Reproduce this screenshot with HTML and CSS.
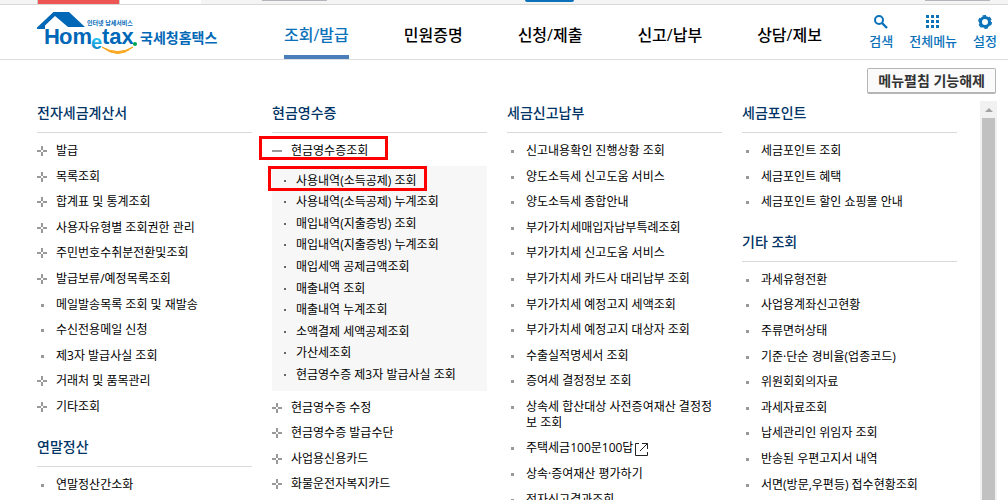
FILE: index.html
```html
<!DOCTYPE html>
<html lang="ko">
<head>
    <meta charset="UTF-8">
    <meta name="viewport" content="width=device-width, initial-scale=1.0">
    <title>국세청홈택스</title>
    <link rel="stylesheet" href="styles.css">
</head>
<body>
    <div class="top-strip">
        <span class="tab red"></span>
        <span class="tab white"></span>
        <span class="field"></span>
        <span class="search"></span>
        <span class="field last"></span>
    </div>

    <header class="header">
        <a class="logo" href="#" aria-label="홈택스">
            <svg width="182" height="46" viewBox="0 0 182 46">
                <defs>
                    <linearGradient id="eColor" x1="0" y1="0" x2="0" y2="1">
                        <stop offset="0.4" stop-color="#27c0ee"/>
                        <stop offset="1" stop-color="#0068b7"/>
                    </linearGradient>
                </defs>
                <path d="M0 16.5 L16.5 1 H32 L48 16 H31 L18 5 L8 14.5 V18 H0 Z" fill="#0068b7"/>
                <g class="logo-word">
                    <text x="7" y="33">H</text>
                    <text x="22" y="33">om</text>
                    <text class="logo-e" x="54" y="38" fill="url(#eColor)">e</text>
                    <text x="65" y="33">tax</text>
                </g>
                <circle cx="98" cy="33" r="2" fill="#00a650"/>
                <path d="M65 36 Q81 49 96 36 Q81 45 65 36 Z" fill="#f9a61a" stroke="#f9a61a"/>
                <text class="logo-sub" x="50" y="14">인터넷 납세서비스</text>
                <text class="logo-name" x="103" y="32">국세청홈택스</text>
            </svg>
        </a>
        <nav class="nav">
            <a class="active" href="#">조회/발급</a>
            <a href="#">민원증명</a>
            <a href="#">신청/제출</a>
            <a href="#">신고/납부</a>
            <a href="#">상담/제보</a>
        </nav>
        <div class="tools">
            <a href="#">
                <svg width="14" height="14" viewBox="0 0 14 14" fill="none" stroke="#0b72ba">
                    <circle cx="5" cy="5" r="4" stroke-width="2"/>
                    <path d="M8 8 L13 13" stroke-width="2.4"/>
                </svg>
                검색
            </a>
            <a href="#">
                <svg width="14" height="14" viewBox="0 0 14 14" fill="#0b72ba">
                    <path d="M0 0h3v3H0zM5 0h3v3H5zM10 0h3v3h-3zM0 5h3v3H0zM5 5h3v3H5zM10 5h3v3h-3zM0 10h3v3H0zM5 10h3v3H5zM10 10h3v3h-3z"/>
                </svg>
                전체메뉴
            </a>
            <a href="#">
                <svg width="14" height="14" viewBox="0 0 14 14" fill="none" stroke="#0b72ba">
                    <circle cx="7" cy="7" r="4.5" stroke-width="3"/>
                    <circle cx="7" cy="7" r="6.2" stroke-width="1.6" stroke-dasharray="3.6 2.89"/>
                </svg>
                설정
            </a>
        </div>
    </header>

    <main class="menu">
        <div class="menu-top">
            <button type="button">메뉴펼침 기능해제</button>
        </div>
        <div class="menu-body">
            <div class="columns">
                <div class="column">
                    <h2>전자세금계산서</h2>
                    <ul>
                        <li class="plus"><a href="#">발급</a></li>
                        <li class="plus"><a href="#">목록조회</a></li>
                        <li class="plus"><a href="#">합계표 및 통계조회</a></li>
                        <li class="plus"><a href="#">사용자유형별 조회권한 관리</a></li>
                        <li class="plus"><a href="#">주민번호수취분전환및조회</a></li>
                        <li class="plus"><a href="#">발급보류/예정목록조회</a></li>
                        <li><a href="#">메일발송목록 조회 및 재발송</a></li>
                        <li><a href="#">수신전용메일 신청</a></li>
                        <li><a href="#">제3자 발급사실 조회</a></li>
                        <li class="plus"><a href="#">거래처 및 품목관리</a></li>
                        <li class="plus"><a href="#">기타조회</a></li>
                    </ul>
                    <h2>연말정산</h2>
                    <ul>
                        <li><a href="#">연말정산간소화</a></li>
                    </ul>
                </div>

                <div class="column">
                    <h2>현금영수증</h2>
                    <ul>
                        <li class="minus marked"><a href="#">현금영수증조회</a></li>
                        <li class="sub">
                            <ul>
                                <li class="marked"><a href="#">사용내역(소득공제) 조회</a></li>
                                <li><a href="#">사용내역(소득공제) 누계조회</a></li>
                                <li><a href="#">매입내역(지출증빙) 조회</a></li>
                                <li><a href="#">매입내역(지출증빙) 누계조회</a></li>
                                <li><a href="#">매입세액 공제금액조회</a></li>
                                <li><a href="#">매출내역 조회</a></li>
                                <li><a href="#">매출내역 누계조회</a></li>
                                <li><a href="#">소액결제 세액공제조회</a></li>
                                <li><a href="#">가산세조회</a></li>
                                <li><a href="#">현금영수증 제3자 발급사실 조회</a></li>
                            </ul>
                        </li>
                        <li class="plus"><a href="#">현금영수증 수정</a></li>
                        <li class="plus"><a href="#">현금영수증 발급수단</a></li>
                        <li class="plus"><a href="#">사업용신용카드</a></li>
                        <li class="plus"><a href="#">화물운전자복지카드</a></li>
                    </ul>
                </div>

                <div class="column">
                    <h2>세금신고납부</h2>
                    <ul>
                        <li><a href="#">신고내용확인 진행상황 조회</a></li>
                        <li><a href="#">양도소득세 신고도움 서비스</a></li>
                        <li><a href="#">양도소득세 종합안내</a></li>
                        <li><a href="#">부가가치세매입자납부특례조회</a></li>
                        <li><a href="#">부가가치세 신고도움 서비스</a></li>
                        <li><a href="#">부가가치세 카드사 대리납부 조회</a></li>
                        <li><a href="#">부가가치세 예정고지 세액조회</a></li>
                        <li><a href="#">부가가치세 예정고지 대상자 조회</a></li>
                        <li><a href="#">수출실적명세서 조회</a></li>
                        <li><a href="#">증여세 결정정보 조회</a></li>
                        <li><a href="#">상속세 합산대상 사전증여재산 결정정보 조회</a></li>
                        <li>
                            <a class="external" href="#">주택세금100문100답<svg width="13" height="13" viewBox="0 0 13 13" fill="none" stroke="#222">
                                <path d="M4 0.5 H0.5 V12.5 H12.5 V9 M7 0.5 H12.5 V6 M12.5 0.5 L5 8"/>
                            </svg></a>
                        </li>
                        <li><a href="#">상속·증여재산 평가하기</a></li>
                        <li><a href="#">전자신고결과조회</a></li>
                    </ul>
                </div>

                <div class="column">
                    <h2>세금포인트</h2>
                    <ul>
                        <li><a href="#">세금포인트 조회</a></li>
                        <li><a href="#">세금포인트 혜택</a></li>
                        <li><a href="#">세금포인트 할인 쇼핑몰 안내</a></li>
                    </ul>
                    <h2>기타 조회</h2>
                    <ul>
                        <li><a href="#">과세유형전환</a></li>
                        <li><a href="#">사업용계좌신고현황</a></li>
                        <li><a href="#">주류면허상태</a></li>
                        <li><a href="#">기준·단순 경비율(업종코드)</a></li>
                        <li><a href="#">위원회회의자료</a></li>
                        <li><a href="#">과세자료조회</a></li>
                        <li><a href="#">납세관리인 위임자 조회</a></li>
                        <li><a href="#">반송된 우편고지서 내역</a></li>
                        <li><a href="#">서면(방문,우편등) 접수현황조회</a></li>
                    </ul>
                </div>
            </div>
            <div class="scrollbar">
                <span class="arrow"></span>
                <span class="thumb"></span>
            </div>
        </div>
    </main>
</body>
</html>
```

FILE: styles.css
```css
*, *::before, *::after {
    box-sizing: border-box;
}
body {
    display: flex;
    flex-direction: column;
    height: 100vh;
    margin: 0;
    overflow: hidden;
    background-color: #fff;
    color: #000;
    font-family: "Open Sans", "Noto Sans CJK KR", sans-serif;
    font-size: 12px;
    line-height: 1.3;
}
a {
    color: inherit;
    text-decoration: none;
}
ul {
    margin: 0;
    padding: 0;
    list-style: none;
}

/* Bottom edge of the bar above the header */
.top-strip {
    display: flex;
    flex: none;
    align-items: flex-start;
    height: 5px;
    padding: 0 18px 0 37px;
    background-color: #f4f4f5;
    border-bottom: 1px solid #d8d8d4;
}
.tab {
    width: 82px;
    height: 4px;
    border-left: 1px solid #ccc;
}
.tab.red {
    background-color: #ee5555;
}
.tab.white {
    background-color: #fff;
}
.field {
    width: 65px;
    height: 1px;
    margin-left: 61px;
    background-color: #b5b5ba;
}
.field.last {
    margin-left: auto;
}
.search {
    width: 49px;
    height: 2px;
    margin-left: 198px;
    background-color: #0b72ba;
    border-radius: 0 0 2px 2px;
}

/* Header */
.header {
    display: flex;
    flex: none;
    height: 55px;
    padding: 0 11px 0 37px;
    border-bottom: 1px solid #ddd;
}
.logo {
    padding-top: 6px;
}
.logo-word {
    font: bold 22px "Liberation Sans", sans-serif;
    fill: #0068b7;
}
.logo-e {
    font-size: 20px;
}
.logo-sub {
    font: bold 6px "Noto Sans CJK KR", sans-serif;
    fill: #0068b7;
}
.logo-name {
    font: bold 14px "Noto Sans CJK KR", sans-serif;
    fill: #0068b7;
}
.nav {
    display: flex;
    gap: 55px;
    margin-left: 65px;
}
.nav a {
    padding-top: 18px;
    font-size: 16px;
    font-weight: 500;
    line-height: 24px;
    white-space: nowrap;
}
.nav a.active {
    color: #0b72ba;
    border-bottom: 4px solid #4a7ebb;
}
.tools {
    display: flex;
    gap: 16px;
    margin-left: auto;
    padding-top: 10px;
}
.tools a {
    display: flex;
    flex-direction: column;
    align-items: center;
    gap: 3px;
    color: #0b72ba;
    font-size: 13px;
    font-weight: 500;
    line-height: 18px;
    white-space: nowrap;
}

/* Menu */
.menu {
    display: flex;
    flex: 1;
    flex-direction: column;
    min-height: 0;
}
.menu-top {
    display: flex;
    flex: none;
    justify-content: flex-end;
    padding: 8px 12px 7px;
}
.menu-top button {
    height: 26px;
    padding: 0 10px;
    background-color: #fafafa;
    border: 1px solid #b5b5b5;
    border-bottom-width: 2px;
    border-radius: 2px;
    color: #333;
    font-family: inherit;
    font-size: 14px;
    font-weight: bold;
    line-height: 20px;
}
.menu-body {
    display: flex;
    flex: 1;
    gap: 23px;
    min-height: 0;
    padding: 0 11px 0 37px;
    overflow: hidden;
}
.columns {
    display: grid;
    flex: 1;
    grid-template-columns: repeat(4, 1fr);
    gap: 20px;
}
.column h2 {
    margin: 0;
    padding: 2px 0 9px;
    border-bottom: 1px solid #d9d9d9;
    color: #003366;
    font-size: 14px;
    font-weight: 500;
    line-height: 20px;
}
.column > ul {
    padding: 5px 0 15px;
}
.column li {
    position: relative;
    padding: 5px 4px 5px 19px;
}
.column li::before {
    content: "";
    position: absolute;
    top: 12px;
    left: 4px;
    width: 3px;
    height: 3px;
    background: #999;
}
.column li.plus::before {
    top: 8px;
    left: 0;
    width: 10px;
    height: 10px;
    background:
        linear-gradient(#999, #999) 0 4px / 4px 2px no-repeat,
        linear-gradient(#999, #999) 6px 4px / 4px 2px no-repeat,
        linear-gradient(#999, #999) 4px 0 / 2px 4px no-repeat,
        linear-gradient(#999, #999) 4px 6px / 2px 4px no-repeat;
}
.column li.minus::before {
    left: 0;
    width: 10px;
    height: 2px;
}
.column li.sub {
    margin: 2px 0 4px;
    padding: 4px 0 5px;
    background-color: #f7f7f7;
}
.column li.sub::before {
    content: none;
}
.column .sub li {
    padding: 3px 0 3px 24px;
}
.column .sub li::before {
    top: 10px;
    left: 12px;
    width: 2px;
    height: 2px;
    background: #666;
}
.external svg {
    margin-left: 2px;
    vertical-align: -4px;
}

/* Red frames round the two highlighted links */
.marked::after {
    content: "";
    position: absolute;
    top: -2px;
    left: -13px;
    width: 129px;
    height: 24px;
    border: 3px solid #f00;
}
.sub .marked::after {
    top: -4px;
    left: -4px;
    width: 159px;
    height: 25px;
}

/* Scrollbar */
.scrollbar {
    display: flex;
    flex: none;
    flex-direction: column;
    align-items: center;
    width: 17px;
    background-color: #f1f1f1;
}
.arrow {
    margin: 7px 0 6px;
    border: 4px solid transparent;
    border-top: none;
    border-bottom-color: #a3a3a3;
}
.thumb {
    flex: 1;
    width: 13px;
    background-color: #c1c1c1;
}
```
